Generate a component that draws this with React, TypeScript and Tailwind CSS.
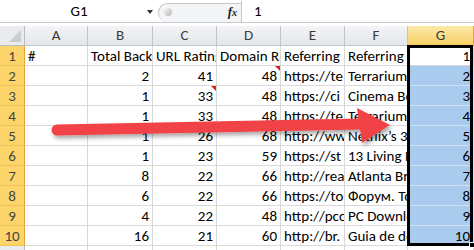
import React from 'react';

const FONT = { fontFamily: "Carlito, Calibri, 'Liberation Sans', sans-serif" };

type Row = { b: string; c: string; d: string; e: string; f: string };

const header: Row = { b: 'Total Back', c: 'URL Rating', d: 'Domain Ra', e: 'Referring', f: 'Referring' };

const rows: Row[] = [
  { b: '2', c: '41', d: '48', e: 'https://te', f: 'Terrarium' },
  { b: '1', c: '33', d: '48', e: 'https://ci', f: 'Cinema Be' },
  { b: '1', c: '33', d: '48', e: 'https://te', f: 'Terrarium' },
  { b: '1', c: '26', d: '68', e: 'http://ww', f: 'Netflix’s 3' },
  { b: '1', c: '23', d: '59', e: 'https://st', f: '13 Living R' },
  { b: '8', c: '22', d: '66', e: 'http://rea', f: 'Atlanta Br' },
  { b: '6', c: '22', d: '66', e: 'https://to', f: 'Форум. To' },
  { b: '4', c: '22', d: '48', e: 'http://pcc', f: 'PC Downlo' },
  { b: '16', c: '21', d: '60', e: 'http://br.', f: 'Guia de de' },
];

const cell = 'border-r border-b border-[#d9d9d9] overflow-hidden whitespace-nowrap px-[3px] leading-[20px] text-black';

const CommentMark = () => (
  <span className="absolute top-0 right-0 w-0 h-0 border-t-[5px] border-l-[5px] border-t-[#e0201a] border-l-transparent" />
);

const Arrow = () => (
  <svg className="absolute left-0 top-0 pointer-events-none" width="474" height="250" viewBox="0 0 474 250">
    <defs>
      <filter id="sh" x="-10%" y="-50%" width="120%" height="200%">
        <feDropShadow dx="2" dy="3" stdDeviation="2" floodColor="#000" floodOpacity="0.35" />
      </filter>
    </defs>
    <g filter="url(#sh)" fill="#f04347">
      <line x1="57" y1="130" x2="362" y2="124" stroke="#f04347" strokeWidth="11" strokeLinecap="round" />
      <polygon points="357,108 390,125 362,143" />
    </g>
  </svg>
);

const App = () => {
  return (
    <div className="relative w-[474px] h-[250px] overflow-hidden bg-white text-[15px]" style={FONT}>
      {/* Formula bar */}
      <div className="flex h-[23px] border-b border-[#c6c9ce] bg-white">
        <div className="relative w-[158px] flex items-center justify-center">
          <span className="text-black">G1</span>
          <span className="absolute right-[5px] top-[10px] w-0 h-0 border-l-[3px] border-r-[3px] border-t-[4px] border-l-transparent border-r-transparent border-t-[#333]" />
        </div>
        <div className="flex flex-1 mt-[3px] bg-[#f4f5f7] border-t border-l border-[#c3c6cb] rounded-tl-[10px] rounded-bl-[10px]">
          <div className="w-[18px] flex items-center justify-center">
            <span className="w-[8px] h-[8px] mt-[-2px] rounded-full bg-gradient-to-br from-[#f5f5f5] to-[#b8b8b8]" />
          </div>
          <div className="w-[64px] flex items-center justify-end pr-[4px]">
            <span className="italic font-bold text-[13px] text-[#222] mt-[-3px]" style={{ fontFamily: "'Liberation Serif', serif" }}>
              f<span className="text-[10px]">x</span>
            </span>
          </div>
          <div className="flex-1 bg-white border-l border-[#c3c6cb] flex items-center pl-[12px] mt-[-3px]">
            <span className="text-black">1</span>
          </div>
        </div>
      </div>
      <div className="h-[3px] bg-white" />

      {/* Sheet grid */}
      <div className="relative grid grid-cols-[25px_63px_65px_64px_64px_64px_63px_66px] auto-rows-[20px]">
        {/* column headers */}
        <div className="relative bg-[#e9ebee] border-r border-b border-[#b9bdc4]">
          <svg className="absolute right-[3px] bottom-[3px]" width="12" height="12" viewBox="0 0 12 12">
            <polygon points="12,0 12,12 0,12" fill="#c9ccd1" />
          </svg>
        </div>
        {['A', 'B', 'C', 'D', 'E', 'F'].map((l) => (
          <div key={l} className="bg-gradient-to-b from-[#f3f4f6] to-[#e3e6ea] border-r border-b border-[#c0c4cb] text-center leading-[19px] text-[#3b3b3b]">
            {l}
          </div>
        ))}
        <div className="bg-gradient-to-b from-[#fde9a9] to-[#f7cf63] border-r border-b border-[#e2a640] text-center leading-[19px] text-[#3b3b3b]">
          G
        </div>

        {/* row 1 */}
        <div className="bg-[#fcd56a] border-r border-b border-r-[#e4a332] border-b-[#f0c35a] text-center leading-[20px] text-[#444]">1</div>
        <div className={cell}>#</div>
        <div className={cell}>{header.b}</div>
        <div className={cell}>{header.c}</div>
        <div className={`${cell} relative`}>
          {header.d}
        </div>
        <div className={cell}>{header.e}</div>
        <div className={cell}>{header.f}</div>
        <div className={`${cell} text-right`}>1</div>

        {rows.map((r, i) => (
          <React.Fragment key={i}>
            <div className="bg-[#fcd56a] border-r border-b border-r-[#e4a332] border-b-[#f0c35a] text-center leading-[20px] text-[#444]">
              {i + 2}
            </div>
            <div className={cell} />
            <div className={`${cell} text-right`}>{r.b}</div>
            <div className={`${cell} text-right relative`}>
              {r.c}
              {i === 1 && <CommentMark />}
            </div>
            <div className={`${cell} text-right relative`}>
              {r.d}
              {i === 0 && <CommentMark />}
            </div>
            <div className={cell}>{r.e}</div>
            <div className={cell}>{r.f}</div>
            <div className="border-r border-b border-[#cfe0f3] bg-[#a9cbee] text-right px-[3px] leading-[20px] text-black">{i + 2}</div>
          </React.Fragment>
        ))}

        {/* row 11 (cut off) */}
        <div className="bg-[#e9ebee] border-r border-[#b9bdc4]" />
        {[0, 1, 2, 3, 4, 5, 6].map((k) => (
          <div key={k} className="border-r border-[#d9d9d9]" />
        ))}

        {/* selection outline G1:G10 */}
        <div className="absolute left-[407px] top-[19px] w-[66px] h-[201px] border-[3px] border-black pointer-events-none">
          <span className="absolute right-[-5px] bottom-[-5px] w-[6px] h-[6px] bg-black border border-white" />
        </div>
      </div>

      <Arrow />
    </div>
  );
};

export default App;
